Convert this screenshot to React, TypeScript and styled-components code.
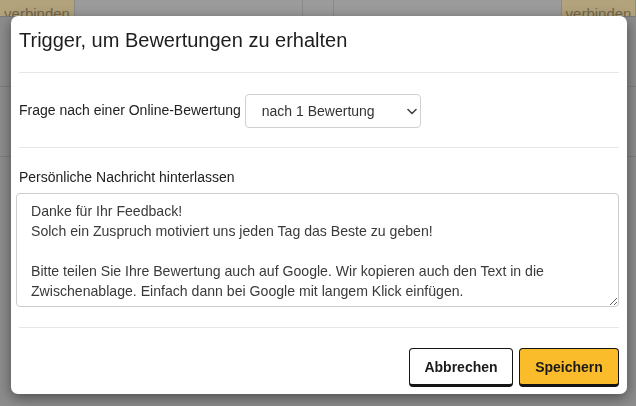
import React from "react";
import styled, { createGlobalStyle } from "styled-components";

const GlobalStyle = createGlobalStyle`
  html, body { margin: 0; padding: 0; }
  body {
    width: 636px;
    height: 406px;
    overflow: hidden;
    font-family: "Liberation Sans", Arial, Helvetica, sans-serif;
  }
  * { box-sizing: border-box; }
`;

/* dimmed page behind the dialog */
const Page = styled.div<{ $shade: string }>`
  width: 636px;
  height: 406px;
  background-color: ${(p) => p.$shade};
  display: flex;
  flex-direction: column;
`;

const TopStrip = styled.div`
  height: 17px;
  display: grid;
  grid-template-columns: 75px 228px 31px 1fr 74px;
  border-bottom: 1px solid #7a7a7a;
`;

const StripCell = styled.div<{ $tan?: boolean }>`
  background-color: ${(p) => (p.$tan ? "#b2a37c" : "#9b9b9b")};
  border-right: 1px solid #8a8a8a;
  overflow: hidden;
  display: flex;
  align-items: flex-end;
  justify-content: center;
  font-size: 15px;
  line-height: 1;
  color: #74684a;
  span { transform: translateY(5px); }
`;

const BgRow = styled.div`
  height: 70px;
  border-bottom: 1px solid #7f7f7f;
`;

const Backdrop = styled.div`
  position: fixed;
  inset: 0;
  padding: 16px 9px 12px 11px;
  display: flex;
  align-items: flex-start;
`;

const Modal = styled.div`
  width: 616px;
  height: 378px;
  background: #fff;
  border-radius: 7px;
  box-shadow: 0 4px 14px rgba(0, 0, 0, 0.45);
  display: flex;
  flex-direction: column;
`;

const Header = styled.div`
  height: 56px;
  padding: 12px 8px 0;
`;

const Title = styled.h5`
  margin: 0;
  font-size: 20px;
  line-height: 24px;
  font-weight: 400;
  color: #1d1d1d;
`;

const Divider = styled.hr`
  margin: 0 8px;
  border: 0;
  border-top: 1px solid #e6e6e6;
`;

const SelectRow = styled.div`
  height: 74px;
  padding: 0 8px;
  display: flex;
  align-items: center;
  gap: 4px;
`;

const Label = styled.label`
  font-size: 14px;
  color: #222;
`;

const SelectWrap = styled.div`
  position: relative;
  width: 176px;
  height: 34px;
  margin-top: 1px;
`;

const Select = styled.select`
  appearance: none;
  width: 100%;
  height: 100%;
  border: 1px solid #d0d0d0;
  border-radius: 4px;
  background: #fff;
  padding: 0 0 0 16px;
  font-family: inherit;
  font-size: 14px;
  color: #333;
`;

const Chevron = styled.svg`
  position: absolute;
  right: 4px;
  top: 14px;
  pointer-events: none;
`;

const MessageBlock = styled.div`
  height: 179px;
  padding: 21px 5px 0;
  display: flex;
  flex-direction: column;
  gap: 8px;
`;

const MessageLabel = styled(Label)`
  padding-left: 3px;
`;

const TextArea = styled.textarea`
  width: 603px;
  height: 114px;
  border: 1px solid #cdcdcd;
  border-radius: 4px;
  padding: 7px 12px 0 14px;
  resize: vertical;
  font-family: inherit;
  font-size: 14.1px;
  line-height: 20px;
  color: #3a3a3a;
  overflow: hidden;
`;

const Footer = styled.div`
  flex: 1;
  padding: 20px 8px 0;
  display: flex;
  justify-content: flex-end;
  align-items: flex-start;
  gap: 6px;
`;

const Button = styled.button<{ $primary?: boolean }>`
  height: 39px;
  padding: 0;
  border: 1px solid #141414;
  border-bottom-width: 3px;
  border-radius: 4px;
  background: ${(p) => (p.$primary ? "#fbbc2c" : "#fff")};
  font-family: inherit;
  font-size: 14px;
  font-weight: 700;
  color: #1a1a1a;
  width: ${(p) => (p.$primary ? "100px" : "104px")};
`;

const message =
  "Danke für Ihr Feedback!\nSolch ein Zuspruch motiviert uns jeden Tag das Beste zu geben!\n\nBitte teilen Sie Ihre Bewertung auch auf Google. Wir kopieren auch den Text in die Zwischenablage. Einfach dann bei Google mit langem Klick einfügen.";

export default function App() {
  return (
    <>
      <GlobalStyle />
      <Page $shade="#8d8d8d">
        <TopStrip>
          <StripCell $tan>
            <span>verbinden</span>
          </StripCell>
          <StripCell />
          <StripCell />
          <StripCell />
          <StripCell $tan>
            <span>verbinden</span>
          </StripCell>
        </TopStrip>
        <BgRow />
        <BgRow />
      </Page>
      <Backdrop>
        <Modal>
          <Header>
            <Title>Trigger, um Bewertungen zu erhalten</Title>
          </Header>
          <Divider />
          <SelectRow>
            <Label>Frage nach einer Online-Bewertung</Label>
            <SelectWrap>
              <Select defaultValue="1">
                <option value="1">nach 1 Bewertung</option>
                <option value="2">nach 2 Bewertungen</option>
                <option value="3">nach 3 Bewertungen</option>
              </Select>
              <Chevron width="10" height="7" viewBox="0 0 10 7">
                <path d="M1 1.5l4 4 4-4" fill="none" stroke="#444" strokeWidth="1.6" strokeLinecap="round" strokeLinejoin="round" />
              </Chevron>
            </SelectWrap>
          </SelectRow>
          <Divider />
          <MessageBlock>
            <MessageLabel>Persönliche Nachricht hinterlassen</MessageLabel>
            <TextArea defaultValue={message} />
          </MessageBlock>
          <Divider />
          <Footer>
            <Button>Abbrechen</Button>
            <Button $primary>Speichern</Button>
          </Footer>
        </Modal>
      </Backdrop>
    </>
  );
}
